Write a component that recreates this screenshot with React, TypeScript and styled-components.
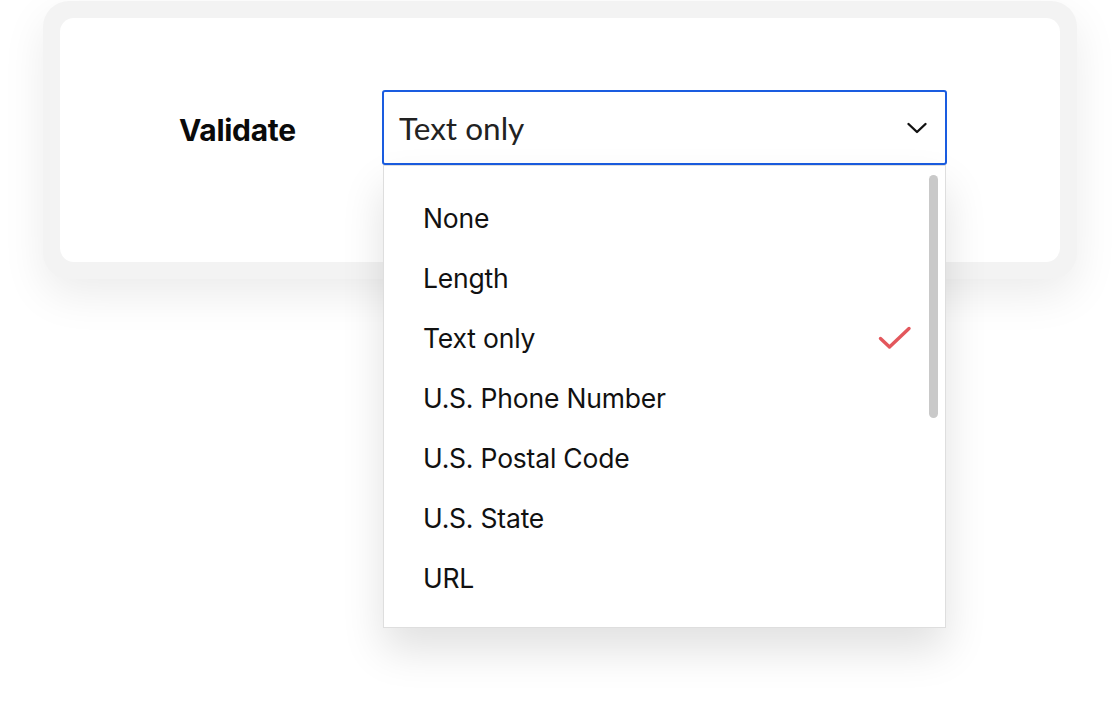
import React from "react";
import styled, { createGlobalStyle } from "styled-components";

const GlobalStyle = createGlobalStyle`
  html, body {
    margin: 0;
    padding: 0;
    background: #ffffff;
  }
  body {
    font-family: Inter, "Noto Sans", sans-serif;
    color: #111;
  }
`;

const options = [
  "None",
  "Length",
  "Text only",
  "U.S. Phone Number",
  "U.S. Postal Code",
  "U.S. State",
  "URL",
];

const Page = styled.div`
  width: 1120px;
  height: 714px;
  padding: 1px 43px 0 43px;
  box-sizing: border-box;
`;

const Frame = styled.div`
  background: #f3f3f3;
  border-radius: 26px;
  padding: 17px;
  box-shadow: 0 16px 44px rgba(0, 0, 0, 0.08);
`;

const Card = styled.div`
  background: #ffffff;
  border-radius: 14px;
  height: 244px;
  box-sizing: border-box;
  padding: 72px 0 0 119px;
  display: flex;
  align-items: flex-start;
`;

const Label = styled.div`
  width: 203px;
  height: 80px;
  display: flex;
  align-items: center;
  font-weight: 700;
  font-size: 30px;
  letter-spacing: -0.3px;
  color: #0a0a0a;
`;

const SelectWrap = styled.div`
  position: relative;
  width: 565px;
`;

const SelectBox = styled.div`
  height: 75px;
  box-sizing: border-box;
  border: 2px solid #1a5ce0;
  border-radius: 3px;
  background: #fff;
  display: flex;
  align-items: center;
  justify-content: space-between;
  padding: 0 17px 0 15px;
  font-family: Lato, "Open Sans", sans-serif;
  font-size: 31.5px;
  color: #222;
`;

const Menu = styled.div`
  position: absolute;
  top: 75px;
  left: 1px;
  right: 1px;
  height: 463px;
  box-sizing: border-box;
  background: #fff;
  border: 1px solid #dedede;
  box-shadow: 0 22px 40px rgba(0, 0, 0, 0.12);
  padding: 22px 0 0 39px;
  display: flex;
  flex-direction: column;
`;

const Option = styled.div`
  height: 60px;
  display: flex;
  align-items: center;
  justify-content: space-between;
  padding-right: 33px;
  font-size: 26.5px;
  color: #111;
  letter-spacing: -0.2px;
`;

const Scrollbar = styled.div`
  position: absolute;
  top: 9px;
  right: 7px;
  width: 9px;
  height: 243px;
  border-radius: 5px;
  background: #c9c9c9;
`;

const Chevron = () => (
  <svg width="22" height="14" viewBox="0 0 22 14" fill="none">
    <path
      d="M2.5 3 L11 11 L19.5 3"
      stroke="#111"
      strokeWidth="2.4"
      strokeLinecap="round"
      strokeLinejoin="round"
    />
  </svg>
);

const Check = () => (
  <svg width="34" height="24" viewBox="0 0 34 24" fill="none">
    <path
      d="M2.5 12.5 L11.5 21 L31 2.5"
      stroke="#e3575c"
      strokeWidth="3.4"
      strokeLinecap="round"
      strokeLinejoin="round"
    />
  </svg>
);

export default function App() {
  const selected = "Text only";
  return (
    <>
      <GlobalStyle />
      <Page>
        <Frame>
          <Card>
            <Label>Validate</Label>
            <SelectWrap>
              <SelectBox>
                <span>{selected}</span>
                <Chevron />
              </SelectBox>
              <Menu>
                {options.map((o) => (
                  <Option key={o}>
                    <span>{o}</span>
                    {o === selected && <Check />}
                  </Option>
                ))}
                <Scrollbar />
              </Menu>
            </SelectWrap>
          </Card>
        </Frame>
      </Page>
    </>
  );
}
